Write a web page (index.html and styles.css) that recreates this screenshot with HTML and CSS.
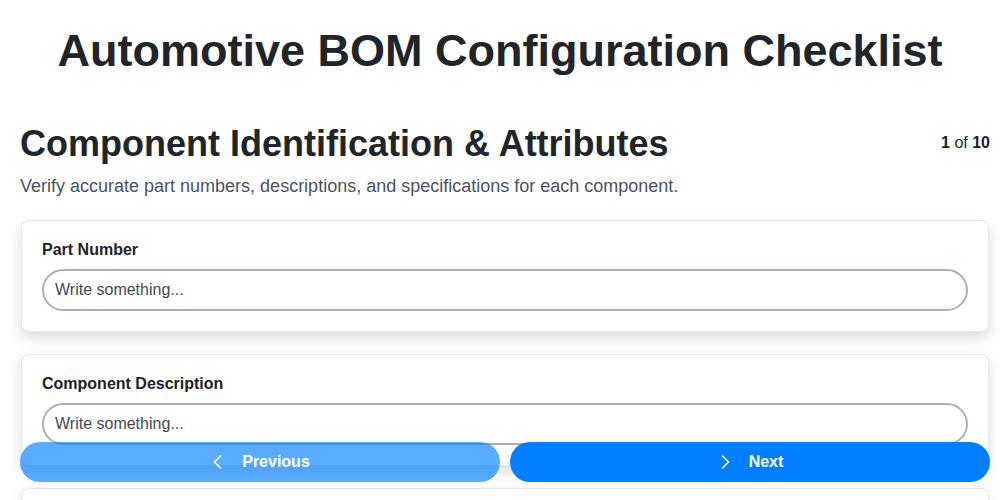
FILE: index.html
```html
<!DOCTYPE html>
<html lang="en">
<head>
<meta charset="utf-8">
<title>Automotive BOM Configuration Checklist</title>
<link rel="stylesheet" href="styles.css">
</head>
<body>
<h1 class="title">Automotive BOM Configuration Checklist</h1>
<main class="content">
  <div class="section-head">
    <h2 class="section-title">Component Identification &amp; Attributes</h2>
    <div class="counter"><b>1</b> of <b>10</b></div>
  </div>
  <p class="section-desc">Verify accurate part numbers, descriptions, and specifications for each component.</p>

  <div class="card">
    <label class="field-label" for="f1">Part Number</label>
    <input class="field-input" id="f1" type="text" placeholder="Write something...">
  </div>
  <div class="card">
    <label class="field-label" for="f2">Component Description</label>
    <input class="field-input" id="f2" type="text" placeholder="Write something...">
  </div>
  <div class="card">
    <label class="field-label" for="f3">Supplier Part Number</label>
    <input class="field-input" id="f3" type="text" placeholder="Write something...">
  </div>
</main>
<nav class="nav-bar">
  <button class="nav-btn prev" type="button">
    <svg class="chev" viewBox="0 0 16 16" width="16" height="16"><polyline points="10.5,2 4.5,8 10.5,14" fill="none" stroke="#fff" stroke-width="1.6" stroke-linecap="round" stroke-linejoin="round"/></svg>
    <span>Previous</span>
  </button>
  <button class="nav-btn next" type="button">
    <svg class="chev" viewBox="0 0 16 16" width="16" height="16"><polyline points="5.5,2 11.5,8 5.5,14" fill="none" stroke="#fff" stroke-width="1.6" stroke-linecap="round" stroke-linejoin="round"/></svg>
    <span>Next</span>
  </button>
</nav>
</body>
</html>
```
FILE: styles.css
```css
html, body {
  margin: 0;
  padding: 0;
  background: #ffffff;
  font-family: "Liberation Sans", Arial, sans-serif;
  color: #212529;
}

.title {
  margin: 25px 0 46px;
  font-size: 45px;
  font-weight: bold;
  text-align: center;
  color: #212529;
  line-height: 1.15;
}

.content {
  padding: 0 10px 0 20px;
}

.section-head {
  display: flex;
  justify-content: space-between;
  align-items: flex-start;
}

.section-title {
  margin: 0;
  font-size: 36px;
  font-weight: bold;
  line-height: 1.15;
  color: #212529;
}

.counter {
  margin-top: 11px;
  font-size: 16px;
  color: #212529;
}

.section-desc {
  margin: 12px 0 23px;
  font-size: 18px;
  color: #4a5264;
}

.card {
  display: flex;
  flex-direction: column;
  margin: 0 1px 22px 1px;
  padding: 20px;
  border: 1px solid #e6e7eb;
  border-radius: 8px;
  background: #fff;
  box-shadow: 0 6px 14px rgba(0, 0, 0, 0.14);
}

.field-label {
  margin-bottom: 10px;
  font-size: 16px;
  font-weight: bold;
  color: #1f2124;
}

.field-input {
  box-sizing: border-box;
  height: 42px;
  padding: 0 11px;
  border: 2px solid #a9b2bb;
  border-radius: 21px;
  font-family: "Liberation Sans", Arial, sans-serif;
  font-size: 16px;
  color: #333;
  background: #fff;
  outline: none;
}

.field-input::placeholder {
  color: #444a52;
  opacity: 1;
}

.nav-bar {
  position: fixed;
  left: 20px;
  right: 10px;
  bottom: 18px;
  display: flex;
  gap: 10px;
}

.nav-btn {
  flex: 1;
  display: flex;
  align-items: center;
  justify-content: center;
  gap: 16px;
  height: 40px;
  border: none;
  border-radius: 20px;
  background: #0080ff;
  color: #fff;
  font-family: "Liberation Sans", Arial, sans-serif;
  font-size: 16px;
  font-weight: bold;
}

.nav-btn.prev {
  opacity: 0.65;
}

.chev {
  display: block;
}
```
